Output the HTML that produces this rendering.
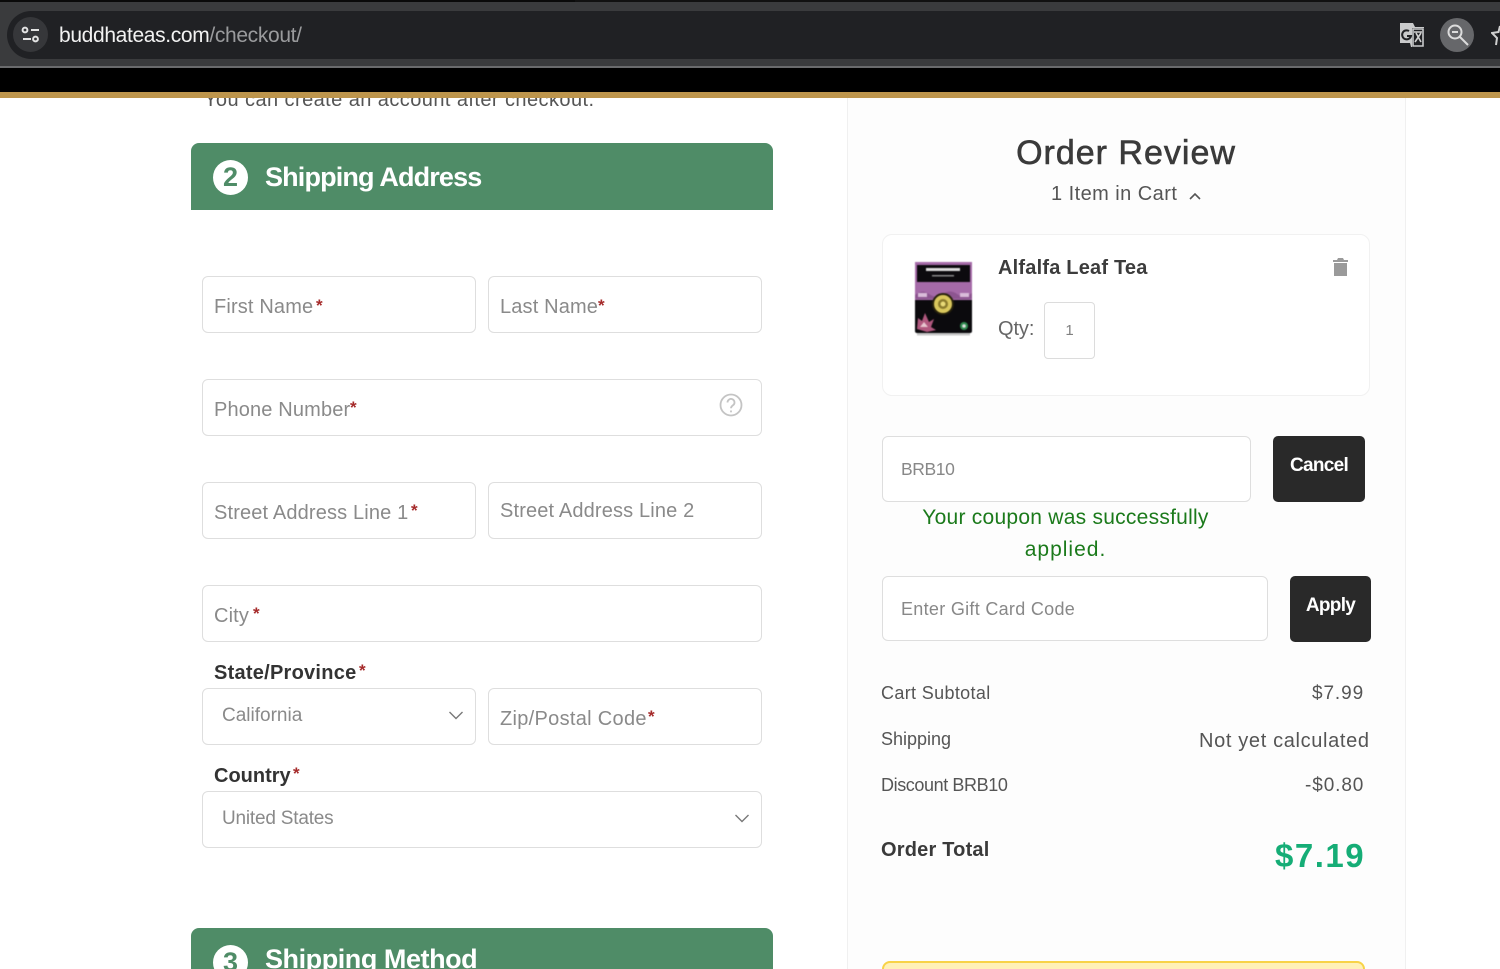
<!DOCTYPE html>
<html lang="en"><head><meta charset="utf-8"><title>Checkout</title>
<style>
html,body{margin:0;padding:0;background:#fff}
#p{position:relative;width:1500px;height:969px;overflow:hidden;background:#fff;font-family:"Liberation Sans",sans-serif}
#p div,#p svg{position:absolute}
.t{white-space:nowrap;line-height:24px;height:24px}
.b{box-sizing:border-box;background:#fff;border:1.5px solid #dedede;border-radius:6px}
.g{color:#8a8a8a;font-size:20px;letter-spacing:.15px}
.r{color:#a52a2a;font-weight:bold;font-size:17px}
.l{color:#333;font-size:20px;font-weight:bold;letter-spacing:.25px}
.s{color:#555;font-size:18px;letter-spacing:.35px}
.hd{background:#4f8c67;border-radius:8px 8px 0 0}
.c{width:35px;height:35px;border-radius:50%;background:#fff;color:#4f8c67;text-align:center;font-size:27px;font-weight:bold;line-height:35px}
.h{color:#fff;font-size:27px;font-weight:bold;letter-spacing:-.85px;line-height:32px;white-space:nowrap}
.dk{background:#292929;border-radius:5px;color:#fff;font-size:19px;font-weight:bold;text-align:center;letter-spacing:-.7px}
</style></head><body><div id="p">

<div style="left:0;top:0;width:1500px;height:68px;background:#3a3b3d"></div>
<div style="left:0;top:0;width:575px;height:2px;background:#0a0a0a"></div>
<div style="left:575px;top:0;width:925px;height:2px;background:#111"></div>
<div style="left:7px;top:11px;width:1493px;height:48px;background:#202124;border-radius:24px 0 0 24px"></div>
<div style="left:0;top:66px;width:1500px;height:2px;background:#6a6b6d"></div>
<div style="left:13px;top:17px;width:35px;height:35px;border-radius:50%;background:#36373a"></div>
<svg style="left:20px;top:25px" width="22" height="20" viewBox="0 0 22 20" fill="none" stroke="#e4e4e4" stroke-width="2"><circle cx="5" cy="5" r="2.4"/><path d="M11 5h8M3 14h8"/><circle cx="15.5" cy="14" r="2.4"/></svg>
<div class="t" style="left:59px;top:24px;color:#f2f2f2;font-size:21px;letter-spacing:-.35px">buddhateas.com<span style="color:#9a9b9d">/checkout/</span></div>

<svg style="left:1399px;top:22px" width="26" height="26" viewBox="0 0 26 26"><path d="M1 1h13l2 4h9v20H12l-1-4H1z" fill="#c9cacb"/><path d="M13 6h12v19H13z" fill="#202124"/><path d="M14 7h10v17H14z" fill="none" stroke="#c9cacb" stroke-width="1.6"/><path d="M10 9a4.500 4.500 0 1 0 2 5H8" fill="none" stroke="#202124" stroke-width="2"/><path d="M15 10h8M16 20l6-9M17 11l5 9" fill="none" stroke="#d0d0d0" stroke-width="1.6"/></svg>
<div style="left:1440px;top:18px;width:34px;height:34px;border-radius:50%;background:#66676a"></div>
<svg style="left:1446px;top:23px" width="24" height="24" viewBox="0 0 24 24" fill="none" stroke="#dcdcdc" stroke-width="2"><circle cx="9" cy="9" r="6.500"/><path d="M14 14l8 8M6 9h6"/></svg>
<svg style="left:1491px;top:25px" width="9" height="22" viewBox="0 0 9 22"><path d="M9 1l-1.500 6L1 8l5 5-1 7" fill="none" stroke="#d0d0d0" stroke-width="2"/></svg>

<div class="t" style="left:204px;top:88px;color:#555;font-size:20px;letter-spacing:.43px;z-index:0">You can create an account after checkout.</div>
<div style="left:0;top:68px;width:1500px;height:24px;background:#000;z-index:1"></div>
<div style="left:0;top:92px;width:1500px;height:6px;background:#bd954c;z-index:1"></div>

<div style="left:847px;top:98px;width:559px;height:871px;background:#fdfdfd;border-left:1px solid #f0f0f0;border-right:1px solid #f0f0f0;box-sizing:border-box"></div>

<div class="hd" style="left:191px;top:143px;width:582px;height:67px"></div>
<div class="c" style="left:213px;top:160px">2</div>
<div class="h" style="left:265px;top:161px">Shipping Address</div>

<div class="b" style="left:202px;top:276px;width:274px;height:57px"></div>
<div class="t g" style="left:214px;top:295px">First Name</div><div class="t r" style="left:316px;top:294px">*</div>
<div class="b" style="left:488px;top:276px;width:274px;height:57px"></div>
<div class="t g" style="left:500px;top:295px">Last Name</div><div class="t r" style="left:598px;top:294px">*</div>

<div class="b" style="left:202px;top:379px;width:560px;height:57px"></div>
<div class="t g" style="left:214px;top:398px">Phone Number</div><div class="t r" style="left:350px;top:396px">*</div>
<svg style="left:719px;top:393px" width="24" height="24" viewBox="0 0 24 24" fill="none" stroke="#c4c4c4" stroke-width="1.800"><circle cx="12" cy="12" r="10.500"/><path d="M8.500 9.500a3.500 3.500 0 1 1 5.500 2.800c-1.300.9-2 1.500-2 3"/><path d="M12 17.500v1.800"/></svg>

<div class="b" style="left:202px;top:482px;width:274px;height:57px"></div>
<div class="t g" style="left:214px;top:501px">Street Address Line 1</div><div class="t r" style="left:411px;top:499px">*</div>
<div class="b" style="left:488px;top:482px;width:274px;height:57px"></div>
<div class="t g" style="left:500px;top:499px">Street Address Line 2</div>

<div class="b" style="left:202px;top:585px;width:560px;height:57px"></div>
<div class="t g" style="left:214px;top:604px">City</div><div class="t r" style="left:253px;top:602px">*</div>

<div class="t l" style="left:214px;top:661px">State/Province</div><div class="t r" style="left:359px;top:659px">*</div>
<div class="b" style="left:202px;top:688px;width:274px;height:57px"></div>
<div class="t g" style="left:222px;top:704px;font-size:19px;letter-spacing:0">California</div>
<svg style="left:448px;top:710px" width="16" height="11" viewBox="0 0 16 11" fill="none" stroke="#777" stroke-width="1.400"><path d="M1.500 2l6.500 6.500L14.500 2"/></svg>
<div class="b" style="left:488px;top:688px;width:274px;height:57px"></div>
<div class="t g" style="left:500px;top:707px;letter-spacing:.3px">Zip/Postal Code</div><div class="t r" style="left:648px;top:705px">*</div>

<div class="t l" style="left:214px;top:764px;letter-spacing:0">Country</div><div class="t r" style="left:293px;top:762px">*</div>
<div class="b" style="left:202px;top:791px;width:560px;height:57px"></div>
<div class="t g" style="left:222px;top:807px;font-size:19px;letter-spacing:-.2px">United States</div>
<svg style="left:734px;top:813px" width="16" height="11" viewBox="0 0 16 11" fill="none" stroke="#777" stroke-width="1.400"><path d="M1.500 2l6.500 6.500L14.500 2"/></svg>

<div class="hd" style="left:191px;top:928px;width:582px;height:60px"></div>
<div class="c" style="left:213px;top:945px;width:35px">3</div>
<div class="h" style="left:265px;top:943px;letter-spacing:-.45px">Shipping Method</div>

<div class="t" style="left:847px;top:135px;width:558px;height:36px;line-height:36px;text-align:center;color:#3a3a3a;font-size:34px;font-weight:normal;letter-spacing:1px;-webkit-text-stroke:.6px #3a3a3a">Order Review</div>
<div class="t" style="left:1051px;top:182px;color:#555;font-size:20px;letter-spacing:.45px">1 Item in Cart</div>
<svg style="left:1188px;top:191px" width="14" height="10" viewBox="0 0 14 10" fill="none" stroke="#555" stroke-width="1.600"><path d="M2 8l5-5 5 5"/></svg>

<div style="left:882px;top:234px;width:488px;height:162px;box-sizing:border-box;background:#fff;border:1px solid #f1f1f1;border-radius:10px"></div>
<svg style="left:912px;top:259px;filter:blur(.6px)" width="63" height="78" viewBox="-2 -2 63 78">
<rect x="1" y="1" width="57" height="71" rx="2" fill="#0b0a0d"/>
<rect x="1" y="1" width="57" height="38" fill="#a56aa8"/>
<path d="M1 34q7-6 14-1t14 0 14 0 15-1v6H1z" fill="#8d5590"/>
<rect x="3" y="4" width="53" height="17" fill="#0c0a0e"/>
<rect x="12" y="7" width="34" height="3" fill="#ddd"/>
<rect x="18" y="14" width="22" height="1.500" fill="#888"/>
<rect x="4" y="32" width="9" height="4" fill="#d9bcd9"/>
<rect x="46" y="32" width="9" height="4" fill="#d9bcd9"/>
<circle cx="29" cy="43" r="10" fill="#d9c75c" stroke="#26210b" stroke-width="2"/>
<circle cx="29" cy="43" r="5" fill="#8a7a2c"/>
<circle cx="29" cy="43" r="2.500" fill="#e8da78"/>
<path d="M3 68l1-11 4 3 3-8 4 9 5-3-3 8 5 3-9 2z" fill="#b0587e"/>
<path d="M6 66l4-5 4 5z" fill="#e8c6cf"/>
<circle cx="50" cy="65" r="4" fill="#2f8a4f"/>
<circle cx="50" cy="65" r="1.800" fill="#ddd"/>
<rect x="3" y="72" width="53" height="2.500" fill="#c8c8c8"/>
</svg>
<div class="t" style="left:998px;top:256px;color:#3c3c3c;font-size:20px;font-weight:bold;letter-spacing:.2px">Alfalfa Leaf Tea</div>
<svg style="left:1332px;top:257px" width="17" height="20" viewBox="0 0 17 20"><path d="M6 1h5l1 2h4v2H1V3h4zM2 6h13v13H2z" fill="#9a9a9a"/></svg>
<div class="t s" style="left:998px;top:317px;font-size:20px;color:#666;letter-spacing:-.1px">Qty:</div>
<div style="left:1044px;top:302px;width:51px;height:57px;box-sizing:border-box;background:#fff;border:1.500px solid #dcdcdc;border-radius:4px"></div>
<div class="t" style="left:1044px;top:319px;width:51px;text-align:center;color:#808080;font-size:15px">1</div>

<div class="b" style="left:882px;top:436px;width:369px;height:66px"></div>
<div class="t" style="left:901px;top:457px;color:#888;font-size:17.500px;letter-spacing:-.4px">BRB10</div>
<div class="dk" style="left:1273px;top:436px;width:92px;height:66px;line-height:59px">Cancel</div>
<div class="t" style="left:882px;top:506px;width:367px;text-align:center;color:#1b7a1b;font-size:21px;letter-spacing:.25px">Your coupon was successfully</div>
<div class="t" style="left:882px;top:538px;width:367px;text-align:center;color:#1b7a1b;font-size:21px;letter-spacing:1px">applied.</div>
<div class="b" style="left:882px;top:576px;width:386px;height:65px"></div>
<div class="t" style="left:901px;top:597px;color:#888;font-size:18px;letter-spacing:.3px">Enter Gift Card Code</div>
<div class="dk" style="left:1290px;top:576px;width:81px;height:66px;line-height:60px">Apply</div>

<div class="t s" style="left:881px;top:681px">Cart Subtotal</div>
<div class="t s" style="left:1312px;top:682px;font-size:19px;letter-spacing:.9px">$7.99</div>
<div class="t s" style="left:881px;top:727px;letter-spacing:0">Shipping</div>
<div class="t s" style="left:1199px;top:729px;font-size:20px;letter-spacing:.65px">Not yet calculated</div>
<div class="t s" style="left:881px;top:773px;letter-spacing:-.4px">Discount BRB10</div>
<div class="t s" style="left:1305px;top:774px;font-size:19px;letter-spacing:.9px">-$0.80</div>
<div class="t" style="left:881px;top:838px;color:#3a3a3a;font-size:20px;font-weight:bold;letter-spacing:.2px">Order Total</div>
<div class="t" style="left:1275px;top:840px;height:32px;line-height:32px;color:#15ad76;font-size:33px;font-weight:bold;letter-spacing:1.500px">$7.19</div>

<div style="left:882px;top:961px;width:483px;height:30px;box-sizing:border-box;background:#fff1b8;border:2px solid #f8d347;border-radius:8px"></div>
</div></body></html>
